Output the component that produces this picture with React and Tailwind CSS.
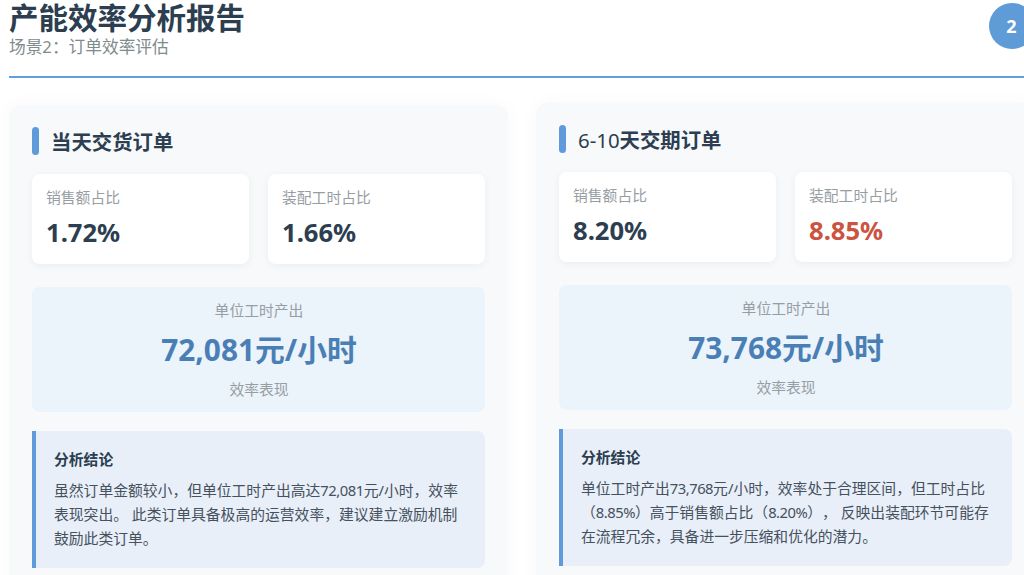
const font = { fontFamily: '"Noto Sans", "Noto Sans CJK SC", sans-serif' };

function Stat({ label, value, red }) {
  return (
    <div className="h-[90px] flex-1 rounded-lg bg-white pl-[14px] pt-[12px] shadow-[0_2px_8px_rgba(0,0,0,0.05)]">
      <div className="text-[14.8px] leading-[22px] text-[#979ea3]">{label}</div>
      <div className={`mt-[9px] text-[25.6px] leading-[32px] font-bold ${red ? "text-[#cb5340]" : "text-[#2c3e50]"}`}>{value}</div>
    </div>
  );
}

function Num({ children }) {
  return <span className="tracking-[-0.5px]">{children}</span>;
}

function Panel({ title, stats, output, children, className }) {
  return (
    <section className={`h-[520px] w-[499px] shrink-0 rounded-xl bg-[#f8f9fb] px-[23px] pt-[22px] shadow-[0_0_20px_rgba(0,0,0,0.03)] ${className}`}>
      <div className="flex h-[28px] items-center">
        <span className="h-[28px] w-[7px] rounded-[4px] bg-[#5f9bdb]" />
        <h2 className="ml-[12px] mt-[2px] text-[20.4px] leading-[28px] font-bold text-[#2c3e50]">{title}</h2>
      </div>
      <div className="mt-[19px] flex gap-[19px]">
        {stats.map((s) => (
          <Stat key={s.label} {...s} />
        ))}
      </div>
      <div className="mt-[23px] flex h-[125px] flex-col items-center rounded-lg bg-[#ebf3fb] pl-[1px] pt-[12px]">
        <div className="text-[14.8px] leading-[22px] text-[#979ea3]">单位工时产出</div>
        <div className="mt-[8px] text-[29.8px] leading-[42px] font-bold text-[#4a7fb5]">{output}</div>
        <div className="mt-[6px] text-[14.8px] leading-[24px] text-[#979ea3]">效率表现</div>
      </div>
      <div className="mt-[19px] h-[137px] rounded-r-lg border-l-[4px] border-[#5f9bdb] bg-[#e8eff8] pl-[18px] pr-[18px] pt-[16px]">
        <h3 className="text-[14.8px] leading-[24px] font-bold text-[#2c3e50]">分析结论</h3>
        <p className="mt-[7px] text-[14.8px] leading-[24px] text-[#46515e] [text-spacing-trim:space-all]">{children}</p>
      </div>
    </section>
  );
}

export default function App() {
  return (
    <div className="relative h-[575px] w-[1024px] overflow-hidden bg-white" style={font}>
      <div className="ml-[9px] flow-root h-[77.5px] w-[1080px] border-b-2 border-[#639edd]">
        <h1 className="mt-[-3px] text-[29.5px] leading-[42px] font-bold text-[#2c3e50]">产能效率分析报告</h1>
        <div className="mt-[-4px] text-[16.7px] leading-[24px] text-[#7f8c8d]">场景2：订单效率评估</div>
      </div>
      <div className="absolute left-[989px] top-[3px] flex h-[46px] w-[46px] items-center justify-center rounded-full bg-[#5f9bd7] pr-[1px] text-[18px] font-bold text-white">2</div>
      <div className="ml-[9px] mt-[25px] flex items-start gap-[28px]">
        <Panel
          className="mt-[2px]"
          title="当天交货订单"
          stats={[
            { label: "销售额占比", value: "1.72%" },
            { label: "装配工时占比", value: "1.66%" },
          ]}
          output="72,081元/小时"
        >
          虽然订单金额较小，但单位工时产出高达<Num>72,081</Num>元/小时，效率表现突出。 此类订单具备极高的运营效率，建议建立激励机制鼓励此类订单。
        </Panel>
        <Panel
          title={<><span className="font-normal">6-10</span>天交期订单</>}
          stats={[
            { label: "销售额占比", value: "8.20%" },
            { label: "装配工时占比", value: "8.85%", red: true },
          ]}
          output="73,768元/小时"
        >
          单位工时产出<Num>73,768</Num>元/小时，效率处于合理区间，但工时占比（<Num>8.85%</Num>）高于销售额占比（<Num>8.20%</Num>）， 反映出装配环节可能存在流程冗余，具备进一步压缩和优化的潜力。
        </Panel>
      </div>
    </div>
  );
}
